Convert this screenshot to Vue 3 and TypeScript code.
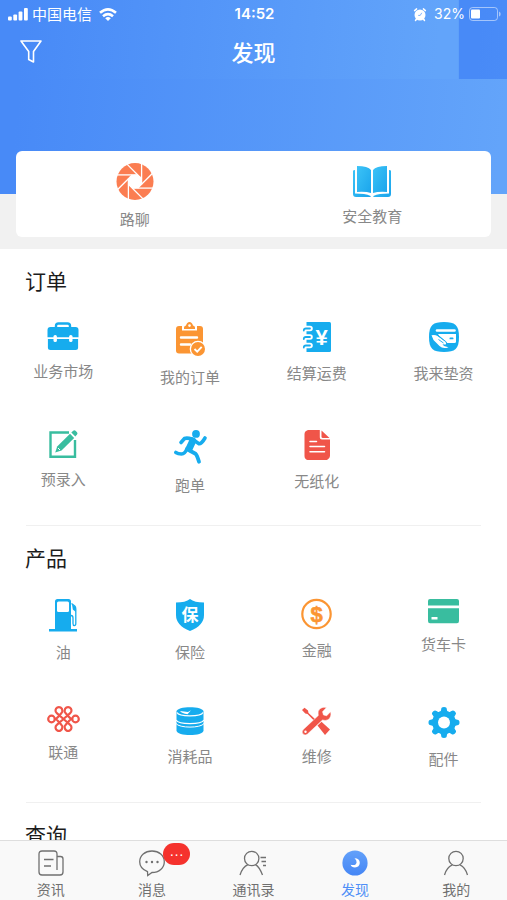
<script setup lang="ts">
import { ref } from 'vue'

interface Entry {
  label: string
  icon: string
}

interface Section {
  title: string
  entries: Entry[]
}

interface Icon {
  w: number
  h: number
  body: string
}

interface Tab {
  label: string
  icon: string
  badge?: string
}

const BLUE = '#16acee'
const ORANGE = '#fb9533'
const GREEN = '#39bd9f'
const RED = '#f05549'

const spokes = (markup: string, cx: number, cy: number): string =>
  [0, 45, 90, 135, 180, 225, 270, 315]
    .map((a) => `<g transform="rotate(${a} ${cx} ${cy})">${markup}</g>`)
    .join('')

const icons: Record<string, Icon> = {
  aperture: {
    w: 38,
    h: 37,
    body:
      `<circle cx="19" cy="18.5" r="18.5" fill="#fb7d51"/>` +
      spokes('<path d="M0 11.9H22" stroke="#fff" stroke-width="1.3"/>', 19, 18.5) +
      `<circle cx="19" cy="18.5" r="7" fill="#fff"/>`,
  },
  openBook: {
    w: 38,
    h: 31,
    body:
      `<defs><linearGradient id="bookFill" x1="0" y1="0" x2="1" y2="1"><stop offset="0" stop-color="#3cc3f7"/><stop offset="1" stop-color="#1ba5ec"/></linearGradient></defs>` +
      `<g fill="url(#bookFill)"><path d="M0 5Q0 4 2 4V27.6Q12 27.6 17.600 30V31H3Q0 31 0 28Z"/><path d="M38 5Q38 4 36 4V27.600Q26 27.600 20.400 30V31H35Q38 31 38 28Z"/>` +
      `<path d="M4 0Q15 0 18 4V27Q13 25.400 4 26Z"/><path d="M34 0Q23 0 20 4V27Q25 25.400 34 26Z"/></g>`,
  },
  briefcase: {
    w: 32,
    h: 28,
    body:
      `<path d="M9 6V4Q9 1.5 11.5 1.5H20.5Q23 1.5 23 4V6" fill="none" stroke="${BLUE}" stroke-width="2.4"/>` +
      `<path d="M3.5 5H28.500Q31.500 5 31.500 8V15.200H.5V8Q.5 5 3.500 5ZM.9 17H31.100V25.500Q31.100 28 28.500 28H3.500Q.9 28 .9 25.500Z" fill="${BLUE}"/>` +
      `<rect x="6.500" y="13" width="3.400" height="7" rx="1.600" fill="#fff"/><rect x="22.100" y="13" width="3.400" height="7" rx="1.600" fill="#fff"/>`,
  },
  clipboard: {
    w: 28,
    h: 34,
    body:
      `<path d="M3 4H24Q27 4 27 7V31.500H3Q0 31.500 0 28.500V7Q0 4 3 4Z" fill="${ORANGE}"/>` +
      `<path d="M6 3V8.500H21V3" fill="#fff"/>` +
      `<path d="M8 7V5.500Q8 4 10 3.500Q11 0 13.500 0Q16 0 17 3.500Q19 4 19 5.500V7Z" fill="${ORANGE}"/><circle cx="13.500" cy="3.600" r="1.300" fill="#fff"/>` +
      `<path d="M5 15.500H21M5 22.500H14" stroke="#fff" stroke-width="2.400" stroke-linecap="round"/>` +
      `<circle cx="22" cy="27" r="8.300" fill="#fff"/><circle cx="22" cy="27" r="7" fill="${ORANGE}"/>` +
      `<path d="M18.500 27L21.200 29.600L25.700 24.800" fill="none" stroke="#fff" stroke-width="1.900"/>`,
  },
  ledger: {
    w: 28,
    h: 30,
    body:
      `<path d="M3.500 0H26.500Q28 0 28 1.500V28.500Q28 30 26.500 30H3.500Z" fill="${BLUE}"/>` +
      `<path d="M2 6.500H7M2 15H7M2 23.500H7" stroke="#fff" stroke-width="5.600" stroke-linecap="round"/>` +
      `<path d="M7 6.500H3Q.8 6.500 .8 8.500M7 15H3Q.8 15 .8 17M7 23.500H3Q.8 23.500 .8 25.500" fill="none" stroke="${BLUE}" stroke-width="1.800" stroke-linecap="round"/>` +
      `<text x="18.500" y="22.500" text-anchor="middle" font-family="Liberation Sans, sans-serif" font-weight="700" font-size="22" fill="#fff">¥</text>`,
  },
  handCard: {
    w: 30,
    h: 30,
    body:
      `<path d="M15 0C26 0 30 3 30 15S26 30 15 30S0 27 0 15S4 0 15 0Z" fill="${BLUE}"/>` +
      `<path d="M8 8.500H25.500" stroke="#fff" stroke-width="2.600" stroke-linecap="round"/>` +
      `<path d="M9 12H27V19.500Q27 21 25.500 21H18L10 13.500Z" fill="#fff"/><rect x="20.500" y="15.500" width="4" height="1.800" rx=".9" fill="${BLUE}"/>` +
      `<path d="M2.500 13.200Q6 12.300 8.500 14L16 19.500Q18.500 22.600 15.500 22.600L13.500 22.200L15 24L19.500 25.200Q14 27.500 10.500 24L4.500 18Z" fill="#fff"/>` +
      `<path d="M8.500 13.200L16.800 19.500Q18 21 18 21.500M9.500 17.500L14.500 21" fill="none" stroke="${BLUE}" stroke-width=".9"/>`,
  },
  edit: {
    w: 29,
    h: 28,
    body:
      `<path d="M20 2.500H1.500V26.700H26V10" fill="none" stroke="${GREEN}" stroke-width="2.400"/>` +
      `<path d="M21 3.800L25.200 8L12.500 20.500L6.200 22.500L8.200 16.500Z" fill="${GREEN}"/><path d="M9 18L11 20" stroke="#fff" stroke-width="1"/>` +
      `<path d="M22.300 2.600L24.200.8Q25.400-.2 26.500.8L28 2.300Q29 3.400 28 4.600L26.300 6.500Z" fill="${GREEN}"/>`,
  },
  runner: {
    w: 33,
    h: 34,
    body:
      `<circle cx="22" cy="3.900" r="3.900" fill="${BLUE}"/>` +
      `<g fill="none" stroke="${BLUE}" stroke-linecap="round" stroke-linejoin="round"><path d="M7 12.500L10.500 8.500Q13 7.500 18 9" stroke-width="3.600"/>` +
      `<path d="M18.700 11L15.200 18.500" stroke-width="7"/><path d="M21 11L25 13.700Q27.500 14 31 8" stroke-width="3.600"/>` +
      `<path d="M13 18.500Q11 24 7.500 24Q4 24 1.800 22.500" stroke-width="3.600"/><path d="M15.500 20.500L21.500 23.700Q23 25 25 31.800" stroke-width="3.800"/></g>`,
  },
  paper: {
    w: 26,
    h: 30,
    body:
      `<path d="M4 0H15.800V7.500Q15.800 9.500 18 9.500H26V26Q26 28.500 23 30H3.500Q.5 29 .5 26V4Q.5 1 4 0Z" fill="${RED}"/>` +
      `<path d="M17.500.5L25.500 8H18.800Q17.500 8 17.500 6.700Z" fill="${RED}"/>` +
      `<path d="M6 11.500H12.500M6 16.500H20.500M6 21.700H20.500" stroke="#fff" stroke-width="1.500" stroke-linecap="round"/>`,
  },
  pump: {
    w: 28,
    h: 32,
    body:
      `<path d="M6 2.500Q6 0 8.500 0H19.500Q22 0 22 2.500V30H28V32.500H0V30H6Z" fill="${BLUE}"/>` +
      `<rect x="8" y="2.500" width="12" height="10.500" rx="1.500" fill="#fff"/>` +
      `<path d="M22.500 4.500L25.800 7Q26.800 8 26.800 10V24.500Q26.800 26.600 25.300 26.600Q24 26.600 24 24.500V19Q24 16.500 22 16.500" fill="none" stroke="${BLUE}" stroke-width="1.300"/><path d="M23 5.200L26.800 8V13L23.800 10.500Z" fill="${BLUE}"/>`,
  },
  shield: {
    w: 28,
    h: 32,
    body:
      `<path d="M14 0Q18.500 3.500 28 3.500V16Q28 26.500 14 32Q0 26.500 0 16V3.500Q9.500 3.500 14 0Z" fill="${BLUE}"/>` +
      `<text x="14" y="22" text-anchor="middle" font-family="Noto Sans CJK SC, sans-serif" font-weight="700" font-size="17" fill="#fff">保</text>`,
  },
  dollar: {
    w: 31,
    h: 30,
    body:
      `<circle cx="15.500" cy="15" r="14.200" fill="none" stroke="${ORANGE}" stroke-width="2.200"/>` +
      `<text x="15.500" y="22.800" text-anchor="middle" font-family="Liberation Sans, sans-serif" font-weight="700" font-size="22" fill="${ORANGE}" stroke="${ORANGE}" stroke-width=".6">$</text>`,
  },
  bankCard: {
    w: 31,
    h: 24,
    body:
      `<path d="M2 0H29Q31 0 31 2V6.500H0V2Q0 0 2 0ZM0 9.300H31V22Q31 24.300 29 24.300H2Q0 24.300 0 22Z" fill="${GREEN}"/>` +
      `<rect x="3.500" y="18" width="6" height="2.500" fill="#fff"/>`,
  },
  knot: {
    w: 33,
    h: 24,
    body:
      `<g fill="none" stroke="${RED}" stroke-width="2.200" stroke-linejoin="round"><circle cx="4.500" cy="12" r="3.300"/><circle cx="28.500" cy="12" r="3.300"/>` +
      `<path d="M16.500 12L9.800 6.200A3.400 3.400 0 1 1 15.300 3.300Q15.800 4.800 14.500 6L11.500 9.500Q9.500 12 7.800 12Q9.500 12 11.500 14.500L14.500 18Q15.800 19.200 15.300 20.700A3.400 3.400 0 1 1 9.800 17.800Z"/>` +
      `<path d="M16.500 12L23.200 6.200A3.400 3.400 0 1 0 17.700 3.300Q17.200 4.800 18.500 6L21.500 9.500Q23.500 12 25.200 12Q23.500 12 21.500 14.500L18.500 18Q17.200 19.200 17.700 20.700A3.400 3.400 0 1 0 23.200 17.800Z"/></g>`,
  },
  drum: {
    w: 28,
    h: 28,
    body:
      `<path d="M.5 4.500C.5-1.300 27.500-1.300 27.500 4.500V23.500C27.500 29.600.5 29.600.5 23.500Z" fill="${BLUE}"/>` +
      `<g fill="none" stroke="#fff" stroke-width="1.200"><path d="M1 5.500C3 10 25 10 27 5.500"/><path d="M0 13C3 17.800 25 17.800 28 13"/><path d="M0 16.500C3 21.300 25 21.300 28 16.500" stroke-width="1"/></g>` +
      `<path d="M4 4L12 5L15 3.200L11.500 7.200Q6 6.500 4 4Z" fill="#fff"/>`,
  },
  tools: {
    w: 29,
    h: 28,
    body:
      `<path d="M0 3L2.500.8L6 3.500L6.500 6L15.200 14L13.800 15.400L5.500 7L3.300 6.500Z" fill="${RED}"/>` +
      `<path d="M15.500 18.500L19.500 14.800L28 22.500L23 28Z" fill="${RED}"/>` +
      `<path d="M24.500.6L20.500 4.800L21.500 8L24.700 8.800L28.600 4.700Q30 10 26 12.700Q23.500 14 20.500 13L5.500 27Q3 29 1 27Q-.8 25 1.300 22.500L16.300 8.500Q15.300 4 18 1.700Q20.800-.6 24.500.6Z" fill="${RED}" stroke="#fff" stroke-width=".5"/>` +
      `<circle cx="3.500" cy="24.800" r="1.200" fill="#fff"/>`,
  },
  gear: {
    w: 32,
    h: 31,
    body:
      `<circle cx="16" cy="15.500" r="11.800" fill="${BLUE}"/>` +
      spokes(`<path d="M11.500 6Q13.200 4 13.200 2.200Q13.200 0 16 0T18.800 2.200Q18.800 4 20.500 6Z" fill="${BLUE}"/>`, 16, 15.5) +
      `<circle cx="16" cy="15.500" r="6" fill="#fff"/>`,
  },
  news: {
    w: 26,
    h: 26,
    body: `<path d="M19 20V4Q19 1 16 1H4Q1 1 1 4V22Q1 25 4 25H22Q25 25 25 22V9Q25 6.500 22.500 6.500H19M19 20V6.500M6 9.500H15.500M6 16H13" fill="none" stroke="currentColor" stroke-width="1.300"/>`,
  },
  chat: {
    w: 26,
    h: 26,
    body:
      `<path d="M13 1C20 1 25.300 5.500 25.300 11.700S20 22.500 13 22.500L8.700 25.500L8.500 21.600Q.7 18.500.7 11.700C.7 5.500 6 1 13 1Z" fill="none" stroke="currentColor" stroke-width="1.300"/>` +
      `<g fill="currentColor"><circle cx="7.500" cy="12" r="1.200"/><circle cx="13" cy="12" r="1.200"/><circle cx="18.500" cy="12" r="1.200"/></g>`,
  },
  contacts: {
    w: 28,
    h: 26,
    body: `<path d="M1 25Q3.500 17 9 14.600M16.500 14.600Q20.500 17 23.500 25M21.500 7.500H27M22.500 11.500H27M24 15.500H27" fill="none" stroke="currentColor" stroke-width="1.300"/><circle cx="12.700" cy="8.500" r="7.200" fill="none" stroke="currentColor" stroke-width="1.300"/>`,
  },
  discover: {
    w: 26,
    h: 26,
    body:
      `<defs><linearGradient id="moonFill" x1="0" y1="0" x2="0" y2="1"><stop offset="0" stop-color="#63a1fa"/><stop offset="1" stop-color="#4586f5"/></linearGradient></defs>` +
      `<circle cx="13" cy="13" r="12.600" fill="url(#moonFill)"/><path d="M12.500 8.300Q17.800 8.500 17.800 13Q17.500 17.200 13 17.500Q9.500 17.300 8.600 14.700Q14 16 14.600 12.500Q14.800 10 12.500 8.300Z" fill="#fff"/>`,
  },
  me: {
    w: 26,
    h: 26,
    body: `<path d="M1.500 25Q3.500 17.500 9.300 14.800M17 14.800Q22.500 17.500 24.500 25" fill="none" stroke="currentColor" stroke-width="1.300"/><circle cx="13" cy="8.500" r="7.200" fill="none" stroke="currentColor" stroke-width="1.300"/>`,
  },
}

const featured: Entry[] = [
  { label: '路聊', icon: 'aperture' },
  { label: '安全教育', icon: 'openBook' },
]

const sections: Section[] = [
  {
    title: '订单',
    entries: [
      { label: '业务市场', icon: 'briefcase' },
      { label: '我的订单', icon: 'clipboard' },
      { label: '结算运费', icon: 'ledger' },
      { label: '我来垫资', icon: 'handCard' },
      { label: '预录入', icon: 'edit' },
      { label: '跑单', icon: 'runner' },
      { label: '无纸化', icon: 'paper' },
    ],
  },
  {
    title: '产品',
    entries: [
      { label: '油', icon: 'pump' },
      { label: '保险', icon: 'shield' },
      { label: '金融', icon: 'dollar' },
      { label: '货车卡', icon: 'bankCard' },
      { label: '联通', icon: 'knot' },
      { label: '消耗品', icon: 'drum' },
      { label: '维修', icon: 'tools' },
      { label: '配件', icon: 'gear' },
    ],
  },
  { title: '查询', entries: [] },
]

const tabs: Tab[] = [
  { label: '资讯', icon: 'news' },
  { label: '消息', icon: 'chat', badge: '···' },
  { label: '通讯录', icon: 'contacts' },
  { label: '发现', icon: 'discover' },
  { label: '我的', icon: 'me' },
]

const activeTab = ref('发现')
</script>

<template>
  <div class="screen">
    <main class="content">
      <div class="hero">
        <header class="top">
          <div class="status">
            <div class="status-side">
              <svg class="signal" width="20" height="13" viewBox="0 0 20 13" fill="#fff" aria-hidden="true">
                <rect x="0" y="8.500" width="3.800" height="4" rx="1" />
                <rect x="5.300" y="6.500" width="3.800" height="6" rx="1" />
                <rect x="10.600" y="3.500" width="3.800" height="9" rx="1" />
                <rect x="16" y="0" width="3.800" height="12.500" rx="1" />
              </svg>
              <span>中国电信</span>
              <svg class="wifi" width="18" height="13" viewBox="0 0 18 13" fill="none" stroke="#fff" stroke-width="2.600" aria-hidden="true">
                <path d="M1 4.800Q9-2.200 17 4.800" />
                <path d="M4 8.200Q9 4 14 8.200" />
                <path d="M6.200 10.200Q9 8 11.800 10.200L9 13Z" fill="#fff" stroke="none" />
              </svg>
            </div>
            <time class="clock">14:52</time>
            <div class="status-side status-end">
              <svg width="12" height="13" viewBox="0 0 12 13" aria-hidden="true">
                <circle cx="6" cy="7" r="5.500" fill="#fff" />
                <path d="M.6 2.600L2.600.9M11.400 2.600L9.400.9M2.500 11L1.500 12.500M9.500 11L10.500 12.500" stroke="#fff" stroke-width="1.500" stroke-linecap="round" />
                <path d="M6.200 7.400L7.800 4.800M6.200 7.400H4.200" stroke="#5f9ffa" stroke-width=".8" fill="none" />
              </svg>
              <span class="percent">32%</span>
              <svg width="32" height="14" viewBox="0 0 32 14" aria-hidden="true">
                <rect x=".5" y=".5" width="28" height="13" rx="3" fill="none" stroke="#fff" stroke-opacity=".5" />
                <rect x="2" y="2.500" width="9" height="9" rx="1" fill="#fff" />
                <path d="M30 4.500Q31.700 5 31.700 7T30 9.500Z" fill="#fff" fill-opacity=".5" />
              </svg>
            </div>
          </div>
          <div class="nav">
            <button class="filter" type="button" aria-label="筛选">
              <svg width="22" height="23" viewBox="0 0 22 23" fill="none" stroke="#fff" stroke-width="1.600" stroke-linejoin="round" aria-hidden="true">
                <path d="M1 1H21L13.500 11.500V22L8.700 19.500V11.500Z" />
              </svg>
            </button>
            <h1>发现</h1>
          </div>
        </header>
        <div class="card">
          <button v-for="item in featured" :key="item.label" class="entry" type="button">
            <svg
              :width="icons[item.icon].w"
              :height="icons[item.icon].h"
              :viewBox="`0 0 ${icons[item.icon].w} ${icons[item.icon].h}`"
              aria-hidden="true"
              v-html="icons[item.icon].body"
            ></svg>
            <span>{{ item.label }}</span>
          </button>
        </div>
      </div>

      <section v-for="section in sections" :key="section.title" class="section">
        <h2>{{ section.title }}</h2>
        <div class="grid">
          <button v-for="item in section.entries" :key="item.label" class="entry" type="button">
            <svg
              :width="icons[item.icon].w"
              :height="icons[item.icon].h"
              :viewBox="`0 0 ${icons[item.icon].w} ${icons[item.icon].h}`"
              aria-hidden="true"
              v-html="icons[item.icon].body"
            ></svg>
            <span>{{ item.label }}</span>
          </button>
        </div>
      </section>
    </main>

    <nav class="tabs">
      <button
        v-for="tab in tabs"
        :key="tab.label"
        class="tab"
        :class="{ active: tab.label === activeTab }"
        type="button"
        @click="activeTab = tab.label"
      >
        <span class="tab-icon">
          <svg
            :width="icons[tab.icon].w"
            :height="icons[tab.icon].h"
            :viewBox="`0 0 ${icons[tab.icon].w} ${icons[tab.icon].h}`"
            aria-hidden="true"
            v-html="icons[tab.icon].body"
          ></svg>
          <span v-if="tab.badge" class="badge">{{ tab.badge }}</span>
        </span>
        <span>{{ tab.label }}</span>
      </button>
    </nav>
  </div>
</template>

<style>
body {
  margin: 0;
  background: #fff;
}
</style>

<style scoped>
.screen {
  display: flex;
  flex-direction: column;
  height: 100vh;
  font-family: "Noto Sans CJK SC", "Liberation Sans", sans-serif;
  color: #1c1c1c;
}

button {
  padding: 0;
  border: 0;
  background: none;
  font-family: inherit;
  color: inherit;
  cursor: pointer;
}

svg {
  display: block;
  flex: none;
  overflow: visible;
}

.content {
  flex: 1;
  min-height: 0;
  overflow-y: auto;
  scrollbar-width: none;
}

.hero {
  padding-bottom: 12px;
  background: linear-gradient(95deg, #488af7 5%, #63a4fa 98%) 0 0 / 100% 194px no-repeat #f1f1f1;
}

.top {
  padding-bottom: 5px;
  background: linear-gradient(95deg, #488af7 5%, #62a4fa 95%) 0 0 / 90.5% 100% repeat-x;
  color: #fff;
}

.status {
  display: grid;
  grid-template-columns: 1fr auto 1fr;
  align-items: center;
  height: 28px;
  padding: 0 6px 0 8px;
  font-size: 15px;
  line-height: 20px;
}

.status-side {
  display: flex;
  align-items: center;
  gap: 4px;
}

.wifi {
  margin-left: 3px;
}

.status-end {
  justify-content: flex-end;
}

.clock {
  font-family: Inter, "Liberation Sans", sans-serif;
  font-weight: 600;
}

.percent {
  margin-left: 4px;
  font-family: Inter, "Liberation Sans", sans-serif;
  font-size: 14px;
}

.nav {
  display: grid;
  grid-template-columns: 1fr auto 1fr;
  align-items: center;
  height: 46px;
  padding: 0 20px;
}

.filter {
  justify-self: start;
}

h1,
h2 {
  margin: 0;
}

h1 {
  font-size: 22px;
  line-height: 32px;
  font-weight: 500;
}

.card {
  display: grid;
  grid-template-columns: 1fr 1fr;
  align-items: center;
  margin: 72px 16px 0;
  padding: 12px 0 8px;
  border-radius: 6px;
  background: #fff;
}

.entry {
  display: flex;
  flex-direction: column;
  align-items: center;
  gap: 11px;
  font-size: 15px;
  line-height: 20px;
  color: #888;
}

.card .entry {
  gap: 9px;
}

.section {
  padding: 19px 0 11px;
}

.section + .section::before {
  content: "";
  display: block;
  height: 1px;
  margin: -19px 26px 18px;
  background: #f0f0f0;
}

h2 {
  padding: 0 25px;
  font-size: 21px;
  line-height: 24px;
  font-weight: 400;
}

.section + .section h2 {
  padding-top: 1px;
}

.grid {
  display: grid;
  grid-template-columns: repeat(4, 1fr);
  grid-auto-rows: minmax(84px, auto);
  align-items: start;
  gap: 24px 0;
  margin-top: 30px;
}

.tabs {
  display: grid;
  grid-template-columns: repeat(5, 1fr);
  flex: none;
  border-top: 1px solid #dedede;
  background: #f9f9f9;
}

.tab {
  display: flex;
  flex-direction: column;
  align-items: center;
  gap: 3px;
  padding: 9px 0 1px;
  font-size: 14px;
  line-height: 20px;
  color: #707070;
}

.tab.active {
  color: #4f8ff7;
}

.tab-icon {
  position: relative;
}

.badge {
  position: absolute;
  top: -7px;
  left: 24px;
  width: 27px;
  height: 22px;
  border-radius: 11px;
  background: #f5322d;
  color: #fff;
  font-family: "Liberation Sans", sans-serif;
  font-size: 14px;
  line-height: 22px;
}
</style>
